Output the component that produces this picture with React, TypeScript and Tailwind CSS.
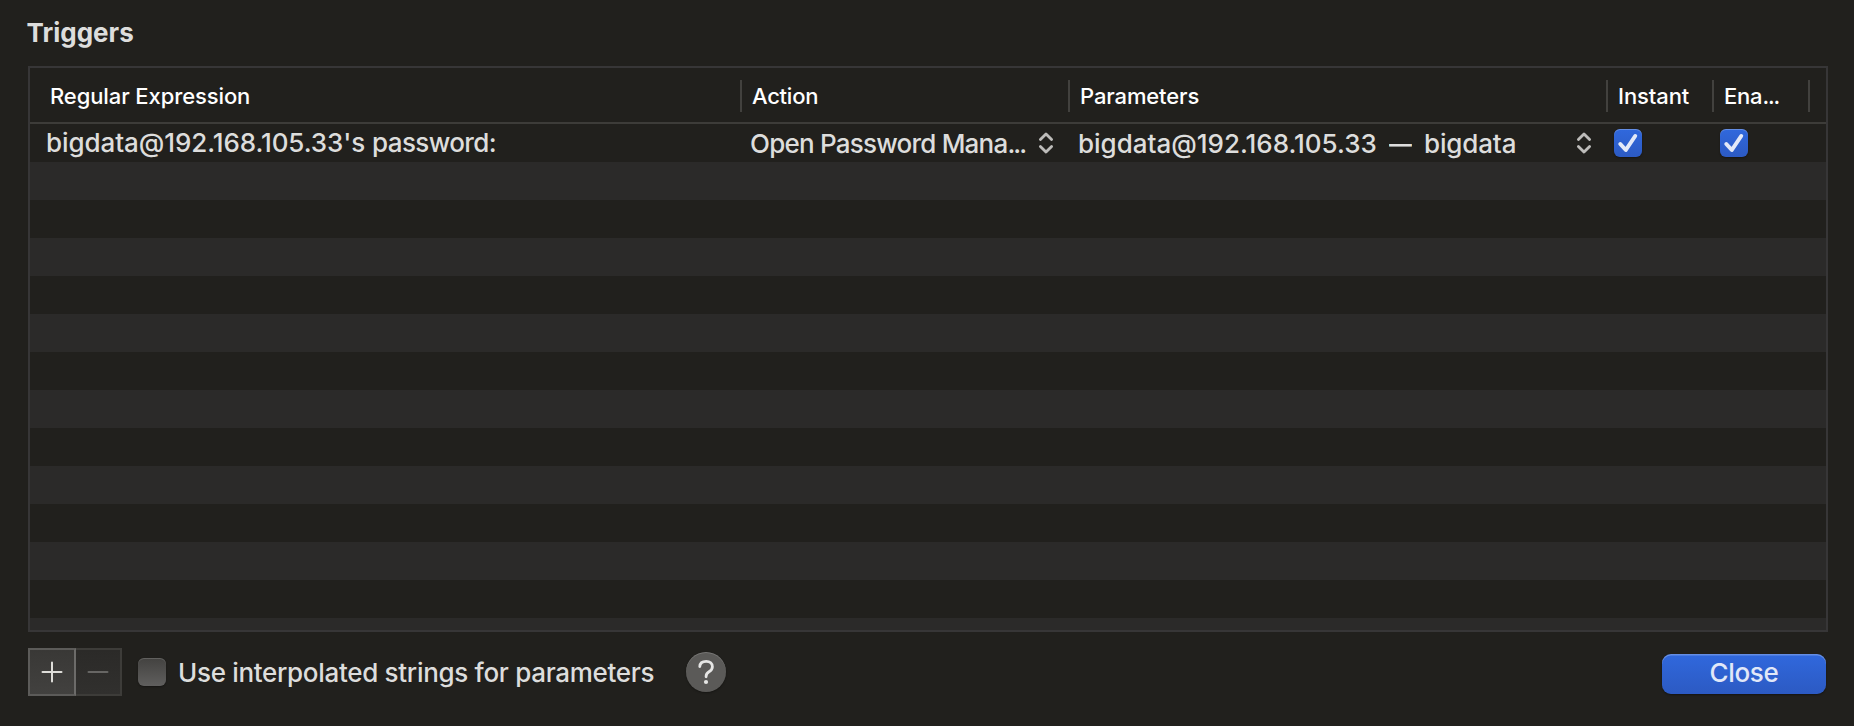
import type { ReactNode } from "react";

function UpDown() {
  return (
    <svg width="16" height="24" viewBox="0 0 16 24" fill="none" stroke="#bdbcba" strokeWidth="2.8" strokeLinecap="round" strokeLinejoin="round" className="shrink-0">
      <path d="M2.4 8.6 8 2.9 13.6 8.6" />
      <path d="M2.4 15.4 8 21.1 13.6 15.4" />
    </svg>
  );
}

function Checked() {
  return (
    <div className="size-7 rounded-[6px] bg-linear-to-b from-[#3068dd] to-[#2c5ac3] shadow-[inset_0_1px_0_rgba(255,255,255,0.25),0_1px_2px_rgba(0,0,0,0.35)]">
      <svg width="28" height="28" viewBox="0 0 28 28" fill="none" stroke="#e3e9f8" strokeWidth="4" strokeLinecap="round" strokeLinejoin="round">
        <path d="M6.3 15 11.8 21 21.2 7" />
      </svg>
    </div>
  );
}

function Divider() {
  return <div className="mt-0.5 h-8 w-0.5 shrink-0 bg-[#42413e]" />;
}

function HeaderCell({ className, children }: { className: string; children: ReactNode }) {
  return <div className={`h-[54px] shrink-0 overflow-hidden leading-14 ${className}`}>{children}</div>;
}

const emptyRows = Array.from({ length: 13 }, (_, i) => i);

export default function App() {
  return (
    <div className="flex h-[726px] w-[1854px] flex-col overflow-hidden bg-[#21201d] font-['Inter',sans-serif] text-[26px] font-[450] whitespace-nowrap text-[#dddddc]">
      <h1 className="h-[66px] pl-[26.5px] leading-[65px] font-bold">Triggers</h1>

      <div className="ml-7 flex h-[566px] w-[1800px] flex-col overflow-hidden border-2 border-[#373637]">
        <div className="flex h-14 shrink-0 items-center border-b-2 border-[#3d3c39] text-[22px] font-medium text-white">
          <HeaderCell className="w-[710px] pl-5 tracking-[-0.1px]">Regular Expression</HeaderCell>
          <Divider />
          <HeaderCell className="w-[326px] pl-2.5 tracking-[-0.25px]">Action</HeaderCell>
          <Divider />
          <HeaderCell className="w-[536px] pl-2.5 tracking-[-0.13px]">Parameters</HeaderCell>
          <Divider />
          <HeaderCell className="w-[104px] pl-2.5 tracking-[-0.1px]">Instant</HeaderCell>
          <Divider />
          <HeaderCell className="w-[94px] pl-2.5 tracking-[-0.2px]">
            Ena<span className="tracking-[-1.1px]">...</span>
          </HeaderCell>
          <Divider />
        </div>

        <div className="flex h-[38px] shrink-0">
          <div className="w-[720px] pl-4 leading-[37px] tracking-[-0.08px]">
            bigdata@192.168.105.33's <span className="tracking-[-0.6px]">password:</span>
          </div>
          <div className="flex w-[327px] pt-[7px]">
            <div className="-mt-[7px] w-[288px] leading-[39px] tracking-[-0.78px]">
              Open Password Mana<span className="tracking-[-2px]">...</span>
            </div>
            <UpDown />
          </div>
          <div className="flex w-[537px] pt-[7px]">
            <div className="-mt-[7px] flex w-[499px] pl-px leading-[39px]">
              <span className="w-[311px] tracking-[-0.01px]">bigdata@192.168.105.33</span>
              <span className="flex w-[35px]">
                <span className="inline-block origin-left scale-x-[0.88]">—</span>
              </span>
              <span className="tracking-[-0.15px]">bigdata</span>
            </div>
            <UpDown />
          </div>
          <div className="w-[106px] pt-[5px]">
            <Checked />
          </div>
          <div className="pt-[5px]">
            <Checked />
          </div>
        </div>

        {emptyRows.map((i) => (
          <div key={i} className={`h-[38px] shrink-0 ${i % 2 === 0 ? "bg-[#2b2a29]" : "bg-[#21201d]"}`} />
        ))}
      </div>

      <div className="flex pt-4 pl-7">
        <div className="flex h-12 w-12 items-center justify-center border-2 border-[#5c5b59] border-r-[#6c6b69] bg-linear-to-b from-[#393836] to-[#42413f]">
          <svg width="22" height="22" viewBox="0 0 22 22" stroke="#deddd9" strokeWidth="2" strokeLinecap="round">
            <path d="M1.5 11H20.5M11 1.5V20.5" />
          </svg>
        </div>
        <div className="flex h-12 w-[46px] items-center justify-center border-2 border-l-0 border-[#3d3c39] bg-linear-to-b from-[#2b2a28] to-[#31302e]">
          <svg width="22" height="22" viewBox="0 0 22 22" stroke="#676664" strokeWidth="2" strokeLinecap="round">
            <path d="M1.5 11H20.5" />
          </svg>
        </div>
        <div className="mt-2.5 ml-4 size-7 rounded-[6px] bg-linear-to-b from-[#434240] to-[#605f5e] shadow-[inset_0_1px_0_rgba(255,255,255,0.16),0_1px_2px_rgba(0,0,0,0.35)]" />
        <div className="ml-3 w-[508px] leading-[49px] tracking-[-0.31px]">Use interpolated strings for parameters</div>
        <div className="mt-1 flex size-10 items-center justify-center rounded-full bg-[#5b5a58] shadow-[inset_0_1px_0_rgba(255,255,255,0.18),0_1px_2px_rgba(0,0,0,0.35)]">
          <svg width="24" height="28" viewBox="0 0 24 28" fill="none" stroke="#e6e6e5" strokeWidth="2.8" strokeLinecap="round" strokeLinejoin="round">
            <path d="M5.8 8.5C6 5 8.6 3.4 12.2 3.4C16 3.4 18.4 5.6 18.4 8.7C18.4 11.2 17 12.6 15 13.8C12.9 15.1 12.1 16.1 12.1 18.2V18.8" />
            <circle cx="12" cy="24" r="2.1" fill="#e6e6e5" stroke="none" />
          </svg>
        </div>
        <button className="mt-1.5 ml-[936px] h-10 w-[164px] rounded-[9px] bg-linear-to-b from-[#3068dd] to-[#2c5ac3] pb-[3px] leading-[37px] tracking-[-0.35px] text-[#e1e8f8] shadow-[inset_0_1.5px_0_rgba(255,255,255,0.25),0_1px_2px_rgba(0,0,0,0.4)]">
          Close
        </button>
      </div>
    </div>
  );
}
